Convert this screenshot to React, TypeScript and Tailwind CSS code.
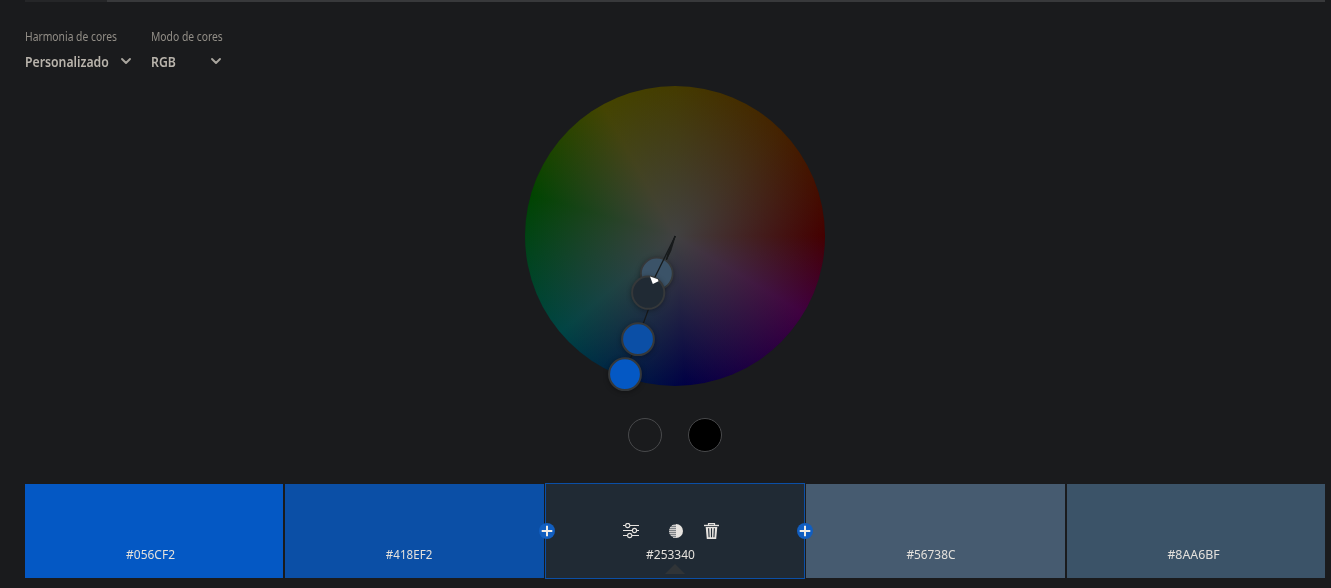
import React from "react";

function Select({ label, value, className }: { label: string; value: string; className: string }) {
  return (
    <div className={className}>
      <div className="w-max origin-left scale-x-[0.86] text-[12px] leading-4 whitespace-nowrap text-[#928e87]">{label}</div>
      <button className="mt-[8px] flex h-[18px] w-full items-center">
        <span className="flex w-0 flex-1 text-left whitespace-nowrap">
          <span className="origin-left scale-x-[0.875] text-[14px] leading-[18px] font-semibold text-[#b9b4ac]">{value}</span>
        </span>
        <svg width="12" height="8" viewBox="0 0 12 8" className="mb-[2px] shrink-0" fill="none" stroke="#a9a59e" strokeWidth="1.9" strokeLinecap="round" strokeLinejoin="round">
          <path d="M2 2 6 6 10 2" />
        </svg>
      </button>
    </div>
  );
}

function Wheel() {
  return (
    <div className="relative size-[300px] rounded-full bg-[radial-gradient(circle_closest-side,#414141_0%,rgba(65,65,65,0)_100%),conic-gradient(#443b00_0deg,#442200_45deg,#440000_90deg,#400040_121deg,#000044_176deg,#004444_230deg,#004400_286deg,#444400_331deg,#443b00_360deg)]">
      <svg className="absolute -top-4 -left-4" width="332" height="340" viewBox="509 70 332 340">
        <defs>
          <filter id="soft" x="-40%" y="-40%" width="180%" height="180%" colorInterpolationFilters="sRGB">
            <feDropShadow dx="0" dy="1" stdDeviation="2.5" floodColor="#000" floodOpacity="0.35" />
          </filter>
        </defs>
        <path d="M675 236 625 374" stroke="#17191a" strokeWidth="1.2" />
        <circle cx="656.8" cy="273.6" r="15.9" fill="#3b5368" stroke="#35383a" strokeWidth="1.8" filter="url(#soft)" />
        <path d="M675.3 236 654 279" stroke="#15191b" strokeWidth="1.3" />
        <path d="M675.3 236 670.8 251 666.6 259.5 667.6 254Z" fill="#181b1c" stroke="#181b1c" strokeWidth=".8" />
        <g stroke="#35383a" strokeWidth="2" filter="url(#soft)">
          <circle cx="648.2" cy="292.7" r="16.1" fill="#202a34" />
          <circle cx="638" cy="339.2" r="15.9" fill="#0b4fa6" />
          <circle cx="625" cy="374.2" r="15.9" fill="#0458c4" />
        </g>
        <path d="M650 276.5 657.8 279.2 658.5 281.3 652.8 284Z" fill="#fff" />
      </svg>
    </div>
  );
}

function SlidersIcon() {
  return (
    <svg width="16" height="16" viewBox="0 0 16 16" fill="none" stroke="#e6e3df" strokeWidth="1.1">
      <path d="M0 2.5h2.5M7 2.5h9M0 7.5h9M14 7.5h2M0 12.5h4.5M9 12.5h7" />
      <circle cx="4.7" cy="2.5" r="2.1" />
      <circle cx="11.5" cy="7.5" r="2.1" />
      <circle cx="6.7" cy="12.5" r="2.1" />
    </svg>
  );
}

function ContrastIcon() {
  return (
    <svg width="14" height="14" viewBox="0 0 14 14">
      <path d="M7 0a7 7 0 0 0 0 14Z" fill="#7c8185" />
      <path d="M7 0a7 7 0 0 1 0 14Z" fill="#e6e3df" />
      <path d="M3 1.5h4M1 3.5h6M.3 5.5h6.7M0 7.5h7M.5 9.5H7M1.8 11.5H7M4 13.4h3" stroke="#d5d3d0" strokeWidth=".9" />
    </svg>
  );
}

function TrashIcon() {
  return (
    <svg width="15" height="16" viewBox="0 0 15 16" fill="none">
      <path d="M4.5 2V.6h6V2" stroke="#e6e3df" strokeWidth="1.2" />
      <path d="M0 1.8h15v1.4H0Z" fill="#e6e3df" />
      <path d="M1.7 4.1h11.6L12.2 16H2.8Z" fill="#e6e3df" />
      <path d="m4.6 5.2.5 9M7.5 5.2v9M10.4 5.2l-.5 9" stroke="#202a34" strokeWidth="1.1" />
    </svg>
  );
}

function AddButton({ className }: { className: string }) {
  return (
    <button className={`absolute top-[39px] size-4 rounded-full bg-[#115ec0] ${className}`}>
      <svg width="16" height="16" viewBox="0 0 16 16" stroke="#f0ece6" strokeWidth="2">
        <path d="M8 2.7v10.6M2.7 8h10.6" />
      </svg>
    </button>
  );
}

function Swatch({ code, className, codeClass }: { code: string; className: string; codeClass: string }) {
  return (
    <div className={`flex h-[94px] flex-col items-center justify-end pb-[15px] text-[13px] leading-[18px] text-[#e4e1dc] ${className}`}>
      <span className={codeClass}>{code}</span>
    </div>
  );
}

export default function App() {
  return (
    <main className="flex h-[588px] w-[1331px] flex-col overflow-hidden bg-[#1a1b1d] pl-[25px] font-['Noto_Sans',sans-serif]">
      <div className="flex h-[2px] w-[1300px] shrink-0 bg-[#38393b]">
        <div className="w-[82px] bg-[#252628]" />
      </div>
      <div className="mt-[27px] flex h-[57px] shrink-0">
        <Select label="Harmonia de cores" value="Personalizado" className="mr-[19px] w-[107px]" />
        <Select label="Modo de cores" value="RGB" className="w-[71px]" />
      </div>
      <div className="flex w-[1300px] shrink-0 flex-col items-center">
        <Wheel />
        <div className="mt-[32px] flex gap-[26px]">
          <div className="size-[34px] rounded-full border border-[#48494b]" />
          <div className="size-[34px] rounded-full border border-[#48494b] bg-black" />
        </div>
      </div>
      <div className="mt-[31px] flex h-[96px] w-[1300px] shrink-0 items-center">
        <Swatch code="#056CF2" className="w-[258px] bg-[#0458c4] pr-[7px]" codeClass="scale-x-[0.92]" />
        <Swatch code="#418EF2" className="ml-[2px] w-[259px] bg-[#0b4fa6] pr-[11px]" codeClass="scale-x-[0.89]" />
        <div className="relative ml-px flex h-[96px] w-[260px] flex-col border border-[#0b4fa6] bg-[#202a34]">
          <AddButton className="-left-[7px]" />
          <AddButton className="-right-[9px]" />
          <div className="mt-[39px] ml-[77px] flex h-4 items-center">
            <SlidersIcon />
            <div className="ml-[30px]"><ContrastIcon /></div>
            <div className="ml-[21px]"><TrashIcon /></div>
          </div>
          <div className="mt-[6px] flex justify-center pr-[9px] text-[13px] leading-[18px] text-[#e4e1dc]">
            <span className="scale-x-[0.92]">#253340</span>
          </div>
          <svg className="mt-[1px] ml-[119px]" width="20" height="10" viewBox="0 0 20 10"><path d="M10 0 20 10H0Z" fill="#303437" /></svg>
        </div>
        <Swatch code="#56738C" className="ml-px w-[259px] bg-[#465b70] pr-[9px]" codeClass="scale-x-[0.91]" />
        <Swatch code="#8AA6BF" className="ml-[2px] w-[258px] bg-[#3b5368] pr-[5px]" codeClass="scale-x-[0.95]" />
      </div>
    </main>
  );
}
